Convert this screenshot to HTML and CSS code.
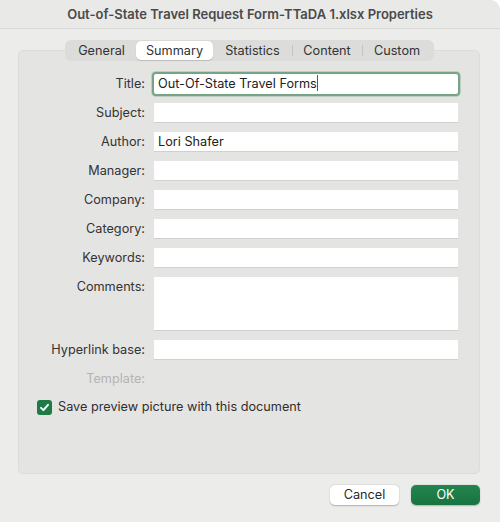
FILE: index.html
```html
<!DOCTYPE html>
<html>
	<head>
		<meta charset="UTF-8">
		<title>Properties</title>
		<link rel="stylesheet" href="styles.css">
	</head>
	<body>
		<div class="window">
			<div class="titlebar">Out-of-State Travel Request Form-TTaDA 1.xlsx Properties</div>
			<div class="content">
				<div class="tabs">
					<span class="tab general">General</span>
					<span class="tab summary active">Summary</span>
					<span class="tab stats">Statistics</span>
					<span class="tab content-tab sep">Content</span>
					<span class="tab custom sep">Custom</span>
				</div>
				<div class="panel">
					<div class="form">
						<label>Title:</label>
						<div class="field focus">Out-Of-State Travel Forms<span class="caret"></span></div>
						<label>Subject:</label>
						<div class="field"></div>
						<label>Author:</label>
						<div class="field">Lori Shafer</div>
						<label>Manager:</label>
						<div class="field"></div>
						<label>Company:</label>
						<div class="field"></div>
						<label>Category:</label>
						<div class="field"></div>
						<label>Keywords:</label>
						<div class="field"></div>
						<label>Comments:</label>
						<div class="field area"></div>
						<label>Hyperlink base:</label>
						<div class="field"></div>
						<label class="disabled">Template:</label>
						<div></div>
					</div>
					<div class="check">
						<span class="box">
							<svg width="11" height="11" viewBox="0 0 11 11"><path d="M2 5.8 L4.4 8.2 L9 2.8" fill="none" stroke="#fff" stroke-width="1.9" stroke-linecap="round" stroke-linejoin="round"/></svg>
						</span>
						Save preview picture with this document
					</div>
				</div>
				<div class="buttons">
					<span class="btn">Cancel</span>
					<span class="btn ok">OK</span>
				</div>
			</div>
		</div>
	</body>
</html>
```

FILE: styles.css
```css
*{
	margin: 0;
	padding: 0;
	box-sizing: border-box;
}

html{
	background: #fff;
}

body{
	width: 500px;
	height: 522px;
	font: 12.7px/20px Inter, "Liberation Sans", Arial, sans-serif;
	color: #2f2f2f;
}

.window{
	height: 522px;
	background: #ececeb;
	border-top-right-radius: 10px;
	overflow: hidden;
}

.titlebar{
	height: 29px;
	line-height: 28px;
	text-align: center;
	font-weight: 600;
	font-size: 13px;
	color: #4a4a4a;
	background: #e9e9e8;
	border-bottom: 1px solid #d9d9d8;
}

.content{
	padding: 11px 20px 0 18px;
}

.tabs{
	display: flex;
	align-items: center;
	width: 369px;
	height: 21px;
	margin: 0 0 0 47px;
	padding: 0 2px;
	background: #dcdcdb;
	border-radius: 6px;
	position: relative;
	z-index: 1;
}

.tab{
	height: 19px;
	line-height: 19px;
	text-align: center;
	color: #333;
}

.general{ width: 69px; }
.summary{ width: 77px; }
.stats{ width: 79px; }
.content-tab{ width: 70px; }
.custom{ width: 70px; }

.tab.sep{
	position: relative;
}

.tab.sep:before{
	content: "";
	position: absolute;
	left: 0;
	top: 4px;
	width: 1px;
	height: 11px;
	background: #c4c4c3;
}

.tab.active{
	background: #fff;
	border-radius: 5px;
	box-shadow: 0 0.5px 1px rgba(0,0,0,0.15);
}

.panel{
	margin-top: -11px;
	height: 424px;
	background: #e4e4e3;
	border: 1px solid #dcdcdb;
	border-radius: 5px;
	padding-top: 23px;
}

.form{
	display: grid;
	grid-template-columns: 126px 304px;
	column-gap: 9px;
	row-gap: 9px;
}

.form label{
	text-align: right;
	height: 20px;
	line-height: 20px;
	color: #333;
}

.form label.disabled{
	color: #b4b4b3;
}

.field{
	height: 20px;
	line-height: 20px;
	background: #fff;
	border-bottom: 1px solid #d0d0cf;
	padding: 0 4px;
	color: #222;
}

.field.area{
	height: 54px;
}

.field.focus{
	border: none;
	border-radius: 2px;
	box-shadow: 0 0 0 2px #76a585, 0 0 0 3px rgba(118,165,133,0.35);
}

.caret{
	display: inline-block;
	width: 1px;
	height: 16px;
	vertical-align: -3px;
	background: #1e7b45;
}

.check{
	display: flex;
	align-items: center;
	gap: 6px;
	margin: 8px 0 0 18px;
	height: 20px;
	color: #2f2f2f;
}

.box{
	display: flex;
	align-items: center;
	justify-content: center;
	width: 15px;
	height: 15px;
	background: #1e7b45;
	border-radius: 3px;
}

.buttons{
	display: flex;
	justify-content: flex-end;
	gap: 12px;
	margin-top: 11px;
}

.btn{
	width: 69px;
	height: 20px;
	line-height: 20px;
	text-align: center;
	background: #fff;
	border-radius: 5px;
	box-shadow: 0 0.5px 1.5px rgba(0,0,0,0.25);
	color: #2a2a2a;
}

.btn.ok{
	background: linear-gradient(#22854e, #187341);
	color: #fff;
}
```
